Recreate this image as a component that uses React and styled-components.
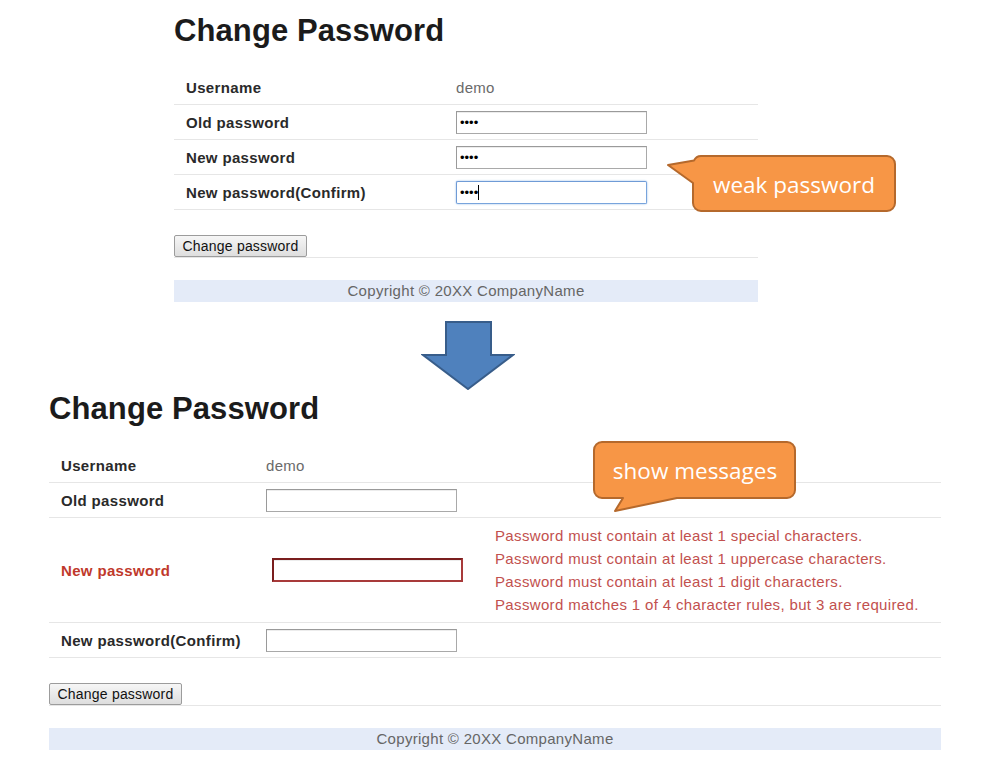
import React from 'react';
import styled, { createGlobalStyle } from 'styled-components';

const GlobalStyle = createGlobalStyle`
  body {
    margin: 0;
    background: #fff;
    font-family: "Liberation Sans", Arial, sans-serif;
  }
`;

const Page = styled.div`
  position: relative;
  width: 984px;
  height: 763px;
  overflow: hidden;
  display: flex;
  flex-direction: column;
  align-items: flex-start;
`;

const Panel = styled.section`
  width: ${({ $width }) => $width}px;
  margin-left: ${({ $left }) => $left}px;
  margin-top: ${({ $top }) => $top || 0}px;
`;

const Title = styled.h1`
  margin: 0 0 20px;
  font-size: 31px;
  line-height: 38px;
  font-weight: 700;
  letter-spacing: 0.1px;
  color: #1b1b1b;
`;

const FormTable = styled.table`
  width: 100%;
  border-collapse: collapse;
  table-layout: fixed;
`;

const LabelCell = styled.th`
  width: ${({ $width }) => $width}px;
  box-sizing: border-box;
  height: 34px;
  padding: 0 12px;
  text-align: left;
  vertical-align: middle;
  border-bottom: 1px solid #e6e6e6;
  font-size: 15px;
  font-weight: 700;
  letter-spacing: 0.35px;
  color: ${({ $error }) => ($error ? '#c0392b' : '#2a2a2a')};
  white-space: nowrap;
`;

const ValueCell = styled.td`
  width: ${({ $width }) => ($width ? `${$width}px` : 'auto')};
  padding: 0;
  height: 34px;
  vertical-align: middle;
  border-bottom: 1px solid #e6e6e6;
  font-size: 15px;
  letter-spacing: 0.3px;
  color: #6a6a6a;
`;

const MessageCell = styled.td`
  padding: 6px 0;
  vertical-align: middle;
  border-bottom: 1px solid #e6e6e6;
  font-size: 15px;
  line-height: 23px;
  letter-spacing: 0.35px;
  color: #c2504e;
  white-space: nowrap;
`;

const FieldWrap = styled.div`
  position: relative;
  display: inline-block;
  vertical-align: middle;
  margin-left: ${({ $error }) => ($error ? 6 : 0)}px;
`;

const Input = styled.input`
  display: block;
  box-sizing: border-box;
  width: 191px;
  height: ${({ $error }) => ($error ? 24 : 23)}px;
  margin: 0;
  padding: 1px 3px;
  font-size: 13px;
  font-family: "Liberation Sans", Arial, sans-serif;
  background: #fff;
  outline: none;
  border: ${({ $error }) => ($error ? 2 : 1)}px solid
    ${({ $error, $focus }) => ($error ? '#a83a3a' : $focus ? '#78a4dc' : '#a9a9a9')};
  border-top-color: ${({ $error, $focus }) => ($error ? '#7a1e1e' : $focus ? '#6f9bd6' : '#9a9a9a')};
  border-left-color: ${({ $error, $focus }) => ($error ? '#7a1e1e' : $focus ? '#6f9bd6' : '#9a9a9a')};
  border-radius: ${({ $focus }) => ($focus ? 2 : 0)}px;
  box-shadow: ${({ $focus }) => ($focus ? '0 0 2px rgba(110, 160, 225, 0.8)' : 'inset 0 1px 0 #ececec')};
`;

const Caret = styled.span`
  position: absolute;
  left: 22px;
  top: 4px;
  width: 1px;
  height: 15px;
  background: #000;
`;

const ButtonBar = styled.div`
  display: flex;
  margin-top: 25px;
  border-bottom: 1px solid #e6e6e6;
`;

const Button = styled.button`
  box-sizing: border-box;
  width: 133px;
  height: 22px;
  padding: 0;
  font-family: "Liberation Sans", Arial, sans-serif;
  font-size: 14px;
  letter-spacing: 0.2px;
  color: #111;
  background: linear-gradient(#f6f6f6, #dedede);
  border: 1px solid #9c9c9c;
  border-radius: 2px;
`;

const Footer = styled.footer`
  margin-top: 22px;
  height: 22px;
  line-height: 22px;
  background: #e4ebf8;
  text-align: center;
  font-size: 15px;
  letter-spacing: 0.3px;
  color: #666;
`;

const Arrow = styled.svg`
  display: block;
  margin: 19px 0 0 421px;
`;

const Callout = styled.div`
  position: absolute;
  left: ${({ $x }) => $x}px;
  top: ${({ $y }) => $y}px;
  width: ${({ $w }) => $w}px;
  height: ${({ $h }) => $h}px;

  svg {
    position: absolute;
    inset: 0;
  }
`;

const CalloutText = styled.div`
  position: absolute;
  left: ${({ $x }) => $x}px;
  top: ${({ $y }) => $y}px;
  width: 202px;
  height: 56px;
  display: flex;
  align-items: center;
  justify-content: center;
  font-family: "Open Sans", "Noto Sans", sans-serif;
  font-size: 22.5px;
  color: #fff;
`;

const messages = [
  'Password must contain at least 1 special characters.',
  'Password must contain at least 1 uppercase characters.',
  'Password must contain at least 1 digit characters.',
  'Password matches 1 of 4 character rules, but 3 are required.',
];

const Bubble = ({ x, y, w, h, path, textX, textY, children }) => (
  <Callout $x={x} $y={y} $w={w} $h={h}>
    <svg width={w} height={h} viewBox={`0 0 ${w} ${h}`}>
      <path d={path} fill="#f79646" stroke="#b5692c" strokeWidth="2" strokeLinejoin="round" />
    </svg>
    <CalloutText $x={textX} $y={textY}>{children}</CalloutText>
  </Callout>
);

const App = () => (
  <Page>
    <GlobalStyle />

    <Panel $left={174} $width={584} $top={12}>
      <Title>Change Password</Title>
      <FormTable>
        <tbody>
          <tr>
            <LabelCell $width={282}>Username</LabelCell>
            <ValueCell>demo</ValueCell>
          </tr>
          <tr>
            <LabelCell>Old password</LabelCell>
            <ValueCell>
              <FieldWrap><Input type="password" defaultValue="demo" readOnly /></FieldWrap>
            </ValueCell>
          </tr>
          <tr>
            <LabelCell>New password</LabelCell>
            <ValueCell>
              <FieldWrap><Input type="password" defaultValue="test" readOnly /></FieldWrap>
            </ValueCell>
          </tr>
          <tr>
            <LabelCell>New password(Confirm)</LabelCell>
            <ValueCell>
              <FieldWrap>
                <Input type="password" defaultValue="test" readOnly $focus />
                <Caret />
              </FieldWrap>
            </ValueCell>
          </tr>
        </tbody>
      </FormTable>
      <ButtonBar>
        <Button type="button">Change password</Button>
      </ButtonBar>
      <Footer>Copyright © 20XX CompanyName</Footer>
    </Panel>

    <Arrow width="94" height="69" viewBox="0 0 94 69">
      <polygon
        points="25,1 70,1 70,34 92,34 47,68 2,34 25,34"
        fill="#4f81bd"
        stroke="#385d8a"
        strokeWidth="2"
        strokeLinejoin="miter"
      />
    </Arrow>

    <Panel $left={49} $width={892}>
      <Title>Change Password</Title>
      <FormTable>
        <tbody>
          <tr>
            <LabelCell $width={217}>Username</LabelCell>
            <ValueCell $width={229}>demo</ValueCell>
            <ValueCell />
          </tr>
          <tr>
            <LabelCell>Old password</LabelCell>
            <ValueCell>
              <FieldWrap><Input type="password" readOnly /></FieldWrap>
            </ValueCell>
            <ValueCell />
          </tr>
          <tr>
            <LabelCell $error>New password</LabelCell>
            <ValueCell>
              <FieldWrap $error><Input type="password" readOnly $error /></FieldWrap>
            </ValueCell>
            <MessageCell>
              {messages.map((m) => (
                <div key={m}>{m}</div>
              ))}
            </MessageCell>
          </tr>
          <tr>
            <LabelCell>New password(Confirm)</LabelCell>
            <ValueCell>
              <FieldWrap><Input type="password" readOnly /></FieldWrap>
            </ValueCell>
            <ValueCell />
          </tr>
        </tbody>
      </FormTable>
      <ButtonBar>
        <Button type="button">Change password</Button>
      </ButtonBar>
      <Footer>Copyright © 20XX CompanyName</Footer>
    </Panel>

    <Bubble
      x={664}
      y={152}
      w={236}
      h={64}
      path="M37,4 H223 A8,8 0 0 1 231,12 V51 A8,8 0 0 1 223,59 H37 A8,8 0 0 1 29,51 V31 L4,13 L30,8.5 A8,8 0 0 1 37,4 Z"
      textX={29}
      textY={4}
    >
      weak password
    </Bubble>

    <Bubble
      x={590}
      y={438}
      w={210}
      h={78}
      path="M12,4 H197 A8,8 0 0 1 205,12 V52 A8,8 0 0 1 197,60 H87 L25,73 L33,60 H12 A8,8 0 0 1 4,52 V12 A8,8 0 0 1 12,4 Z"
      textX={4}
      textY={4}
    >
      show messages
    </Bubble>
  </Page>
);

export default App;
